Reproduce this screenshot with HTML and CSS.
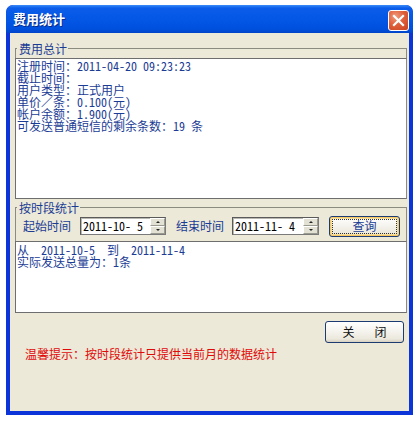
FILE: index.html
```html
<!DOCTYPE html>
<html lang="zh-CN">
<head>
<meta charset="utf-8">
<title>费用统计</title>
<link rel="stylesheet" href="styles.css">
</head>
<body>
<div class="window">
  <div class="titlebar">
    <span class="title">费用统计</span>
    <span class="close-x">
      <svg width="21" height="21" viewBox="0 0 21 21">
        <path d="M6 6 L15 15 M15 6 L6 15" stroke="#fff" stroke-width="2.2" stroke-linecap="square" fill="none"/>
      </svg>
    </span>
  </div>
  <div class="client">
    <fieldset class="group g1">
      <legend>费用总计</legend>
      <div class="box box1">
        <div>注册时间：2011-04-20 09:23:23</div>
        <div>截止时间：</div>
        <div>用户类型：正式用户</div>
        <div>单价／条：0.100(元)</div>
        <div>帐户余额：1.900(元)</div>
        <div>可发送普通短信的剩余条数：19 条</div>
      </div>
    </fieldset>
    <fieldset class="group g2">
      <legend>按时段统计</legend>
      <div class="query-row">
        <span class="label">起始时间</span>
        <div class="date d1">
          <span class="date-text">2011-10- 5</span>
          <span class="spin"><span class="spin-btn up"></span><span class="spin-btn down"></span></span>
        </div>
        <span class="label l2">结束时间</span>
        <div class="date d2">
          <span class="date-text">2011-11- 4</span>
          <span class="spin"><span class="spin-btn up"></span><span class="spin-btn down"></span></span>
        </div>
        <button class="btn btn-query"><span class="focus">查询</span></button>
      </div>
      <div class="box box2">
        <div class="pre">从  2011-10-5  到  2011-11-4</div>
        <div>实际发送总量为：1条</div>
      </div>
    </fieldset>
    <div class="actions">
      <button class="btn btn-close"><span>关</span><span>闭</span></button>
    </div>
    <p class="tip">温馨提示：按时段统计只提供当前月的数据统计</p>
  </div>
</div>
</body>
</html>
```

FILE: styles.css
```css
* { box-sizing: border-box; }

html, body {
  margin: 0;
  padding: 0;
  background: #ffffff;
}

body {
  font-family: "Noto Sans Mono CJK SC", "Noto Sans CJK SC", "DejaVu Sans Mono", monospace;
  font-size: 12px;
  line-height: 12px;
}

.window {
  margin: 5px 0 0 6px;
  width: 407px;
  height: 410px;
  background: #0b35d8;
  border-radius: 7px 7px 0 0;
  display: flex;
  flex-direction: column;
  padding: 0 4px 4px 4px;
  overflow: hidden;
}

.titlebar {
  height: 28px;
  margin: 0 -4px;
  padding: 0 4px 0 7px;
  display: flex;
  align-items: center;
  justify-content: space-between;
  background: linear-gradient(#3b8cf8 0, #0c5de9 3px, #0558e6 40%, #0050de 85%, #0045c8 100%);
  border-radius: 7px 7px 0 0;
}

.title {
  color: #ffffff;
  font-family: "Noto Sans CJK SC", sans-serif;
  font-weight: bold;
  font-size: 13px;
  line-height: 14px;
  text-shadow: 1px 1px 0 #0a2a8a;
  margin-top: -1px;
}

.close-x {
  width: 21px;
  height: 21px;
  margin-right: 0;
  margin-top: 3px;
  border: 1px solid #ffffff;
  border-radius: 3px;
  background: radial-gradient(circle at 35% 30%, #ef9c80 0, #e0603c 45%, #c8421f 100%);
  display: flex;
  align-items: center;
  justify-content: center;
}
.close-x svg { display: block; margin: -1px; }

.client {
  flex: 1;
  background: #ece9d8;
  padding: 9px 2px 0 5px;
  display: flex;
  flex-direction: column;
}

.group {
  margin: 0;
  padding: 0;
  border: 1px solid #8b8b80;
  border-bottom: none;
  min-width: 0;
}

.group legend {
  color: #1b3c95;
  padding: 0 1px 0 2px;
  margin-left: 1px;
  line-height: 13px;
  font-size: 12px;
}

.box {
  background: #ffffff;
  color: #1b3c95;
  margin: 0 -1px;
  border: 1px solid #6e6e6e;
  border-right-color: #8a8a8a;
  padding: 0 0 0 1px;
  line-height: 12px;
}

.box1 {
  margin-top: 3px;
  height: 141px;
  padding-top: 1px;
}

.g2 { margin-top: 2px; }

.query-row {
  display: flex;
  align-items: center;
  height: 22px;
  margin-top: 1px;
  padding-left: 7px;
}

.label {
  color: #1b3c95;
  width: 48px;
  white-space: nowrap;
}

.date {
  display: flex;
  align-items: center;
  justify-content: space-between;
  height: 18px;
  background: #ffffff;
  border: 1px solid #7a7a7a;
  border-top-color: #5a5a5a;
  border-left-color: #5a5a5a;
  box-shadow: inset 1px 1px 0 #b8b8b0;
  padding: 0 0 0 2px;
  color: #000000;
}
.d1 { width: 86px; margin-left: 9px; }
.d2 { width: 87px; margin-left: 8px; }
.l2 { margin-left: 10px; }

.date-text { white-space: pre; }

.spin {
  display: flex;
  flex-direction: column;
  width: 15px;
  height: 16px;
}
.spin-btn {
  flex: 1;
  background: #e3e0d4;
  border: 1px solid #9a9a90;
  border-top-color: #ffffff;
  border-left-color: #ffffff;
  display: flex;
  align-items: center;
  justify-content: center;
}
.spin-btn::after {
  content: "";
  width: 0;
  height: 0;
  border-left: 2px solid transparent;
  border-right: 2px solid transparent;
}
.spin-btn.up::after { border-bottom: 2px solid #222; }
.spin-btn.down::after { border-top: 2px solid #222; }

.btn {
  font-family: inherit;
  font-size: 12px;
  line-height: 12px;
  border: 1px solid #1c3b70;
  border-radius: 3px;
  background: linear-gradient(#ffffff 0, #f6f5f0 40%, #ebe8dc 85%, #d6d0c0 100%);
  padding: 0;
  display: flex;
  align-items: center;
  justify-content: center;
}

.btn-query {
  width: 71px;
  height: 21px;
  margin-left: 10px;
  color: #1b3c95;
  box-shadow: inset 0 0 0 1px #f7c865, inset 0 0 0 2px #f5dfa0;
}
.btn-query .focus {
  display: flex;
  align-items: center;
  justify-content: center;
  width: 65px;
  height: 15px;
  border: 1px dotted #333;
}

.box2 {
  margin-top: 4px;
  height: 72px;
  padding-top: 2px;
}
.pre { white-space: pre; }

.actions {
  display: flex;
  justify-content: flex-end;
  padding-right: 3px;
  margin-top: 8px;
}

.btn-close {
  width: 79px;
  height: 22px;
  color: #111111;
  gap: 20px;
}

.tip {
  margin: 5px 0 0 10px;
  color: #e00a0a;
  line-height: 12px;
}
```
